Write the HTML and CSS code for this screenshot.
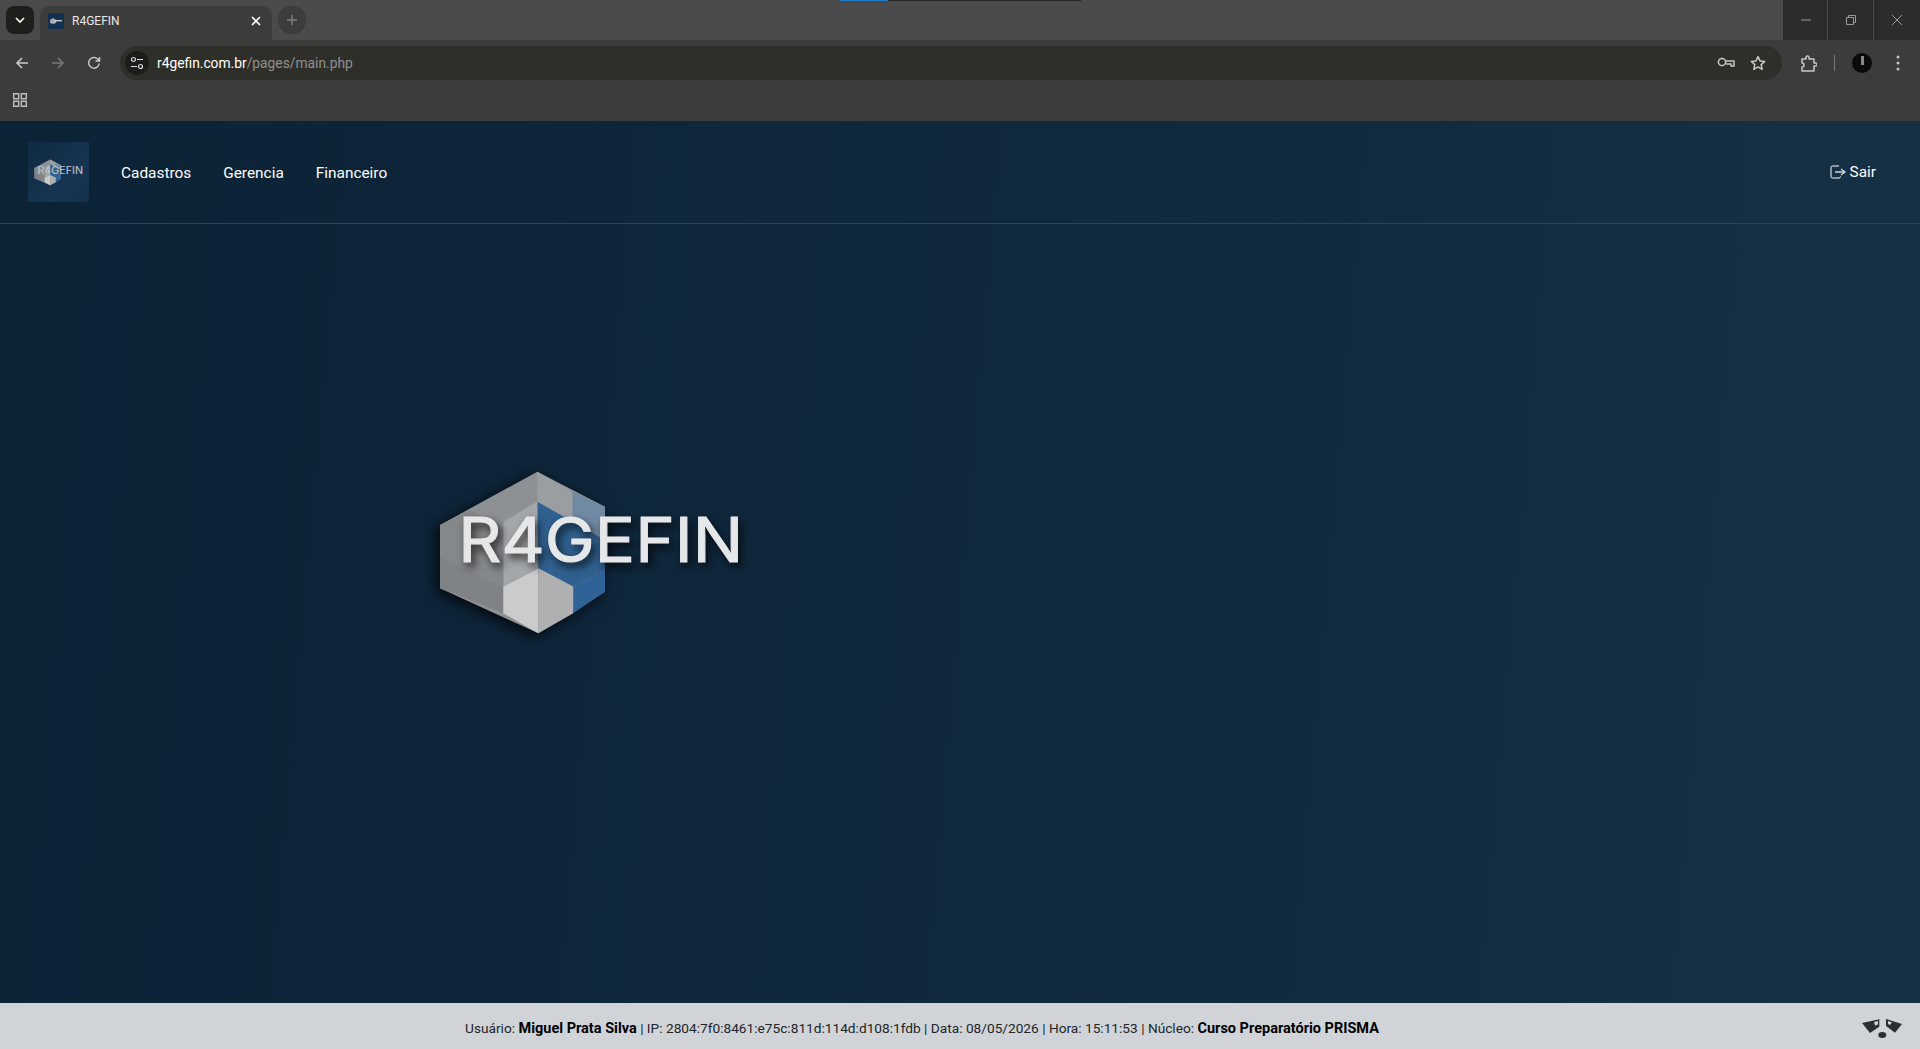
FILE: index.html
```html
<!DOCTYPE html>
<html lang="pt-BR">
<head>
  <meta charset="UTF-8">
  <meta name="viewport" content="width=device-width, initial-scale=1.0">
  <title>R4GEFIN</title>
  <link rel="stylesheet" href="styles.css">
</head>
<body>
  <svg class="defs" width="0" height="0" aria-hidden="true">
    <symbol id="logo-hex" viewBox="0 0 1140 600">
      <polygon points="412,65 120,225 120,415 415,550 615,425 615,170" fill="#8e9194"/>
      <polygon points="412,65 518,125 518,215 412,155" fill="#9b9ea1"/>
      <polygon points="518,125 615,170 615,270 518,215" fill="#718aa3"/>
      <polygon points="412,155 518,215 615,270 615,360 520,410 415,355" fill="#30608f"/>
      <polygon points="412,155 412,355 310,410 310,215" fill="#a4a7aa"/>
      <polygon points="120,225 210,180 310,230 310,410 120,320" fill="#85888b"/>
      <polygon points="120,320 310,410 310,490 120,415" fill="#808386"/>
      <polygon points="310,410 415,355 415,550 310,490" fill="#c9cbcd"/>
      <polygon points="415,355 520,410 520,490 415,550" fill="#aeb0b2"/>
      <polygon points="520,410 615,360 615,425 520,490" fill="#2f6398"/>
    </symbol>
  </svg>

  <div class="loading-bar"><span class="loading-done"></span></div>

  <header class="browser">
    <div class="tabstrip">
      <button class="tab-search" aria-label="Pesquisar guias">
        <svg width="12" height="12" viewBox="0 0 12 12"><path d="M2 4l4 4 4-4" fill="none" stroke="#fff" stroke-width="1.7"/></svg>
      </button>
      <div class="tab">
        <span class="favicon">
          <svg width="16" height="16" viewBox="0 0 16 16"><rect width="16" height="16" fill="#143050"/><polygon points="2,7 5,5 8,7 8,10 5,11 2,10" fill="#a9adb0"/><rect x="6" y="7" width="8" height="1.4" fill="#c9ccce"/></svg>
        </span>
        <span class="tab-title">R4GEFIN</span>
        <svg class="tab-close" width="12" height="12" viewBox="0 0 12 12"><path d="M2 2l8 8M10 2l-8 8" stroke="#fff" stroke-width="1.6"/></svg>
      </div>
      <button class="new-tab" aria-label="Nova guia">
        <svg width="12" height="12" viewBox="0 0 12 12"><path d="M6 1v10M1 6h10" stroke="#7d7d7d" stroke-width="1.5"/></svg>
      </button>
      <div class="window-controls">
        <span class="win-btn"><svg width="12" height="12" viewBox="0 0 12 12"><path d="M1 6h10" stroke="#999" stroke-width="1"/></svg></span>
        <span class="win-btn"><svg width="12" height="12" viewBox="0 0 12 12"><path d="M1.5 3.5h7v7h-7zM3.5 3.5v-2h7v7h-2" fill="none" stroke="#999" stroke-width="1"/></svg></span>
        <span class="win-btn"><svg width="12" height="12" viewBox="0 0 12 12"><path d="M1 1l10 10M11 1l-10 10" stroke="#999" stroke-width="1"/></svg></span>
      </div>
    </div>

    <div class="toolbar">
      <div class="toolbar-row">
        <svg class="tool-icon back" width="16" height="16" viewBox="0 0 16 16"><path d="M14 8H3M8 3L3 8l5 5" fill="none" stroke="#c7c7c7" stroke-width="1.6"/></svg>
        <svg class="tool-icon forward" width="16" height="16" viewBox="0 0 16 16"><path d="M2 8h11M8 3l5 5-5 5" fill="none" stroke="#777" stroke-width="1.6"/></svg>
        <svg class="tool-icon reload" width="16" height="16" viewBox="0 0 16 16"><path d="M13.2 8.5A5.3 5.3 0 1 1 11.6 4L13.5 6M13.5 2v4h-4" fill="none" stroke="#c7c7c7" stroke-width="1.5"/></svg>
        <div class="omnibox">
          <span class="site-info">
            <svg width="14" height="14" viewBox="0 0 14 14"><circle cx="3.5" cy="3.5" r="2" fill="none" stroke="#ddd" stroke-width="1.2"/><path d="M7 3.5h6M1 10.5h6" stroke="#ddd" stroke-width="1.2"/><circle cx="10.5" cy="10.5" r="2" fill="none" stroke="#ddd" stroke-width="1.2"/></svg>
          </span>
          <span class="url"><span class="url-host">r4gefin.com.br</span>/pages/main.php</span>
          <svg class="omni-key" width="18" height="12" viewBox="0 0 18 12"><circle cx="5" cy="5" r="3.6" fill="none" stroke="#c7c7c7" stroke-width="1.5"/><path d="M9 4h8v5h-3V7H9" fill="none" stroke="#c7c7c7" stroke-width="1.5"/></svg>
          <svg class="omni-star" width="16" height="16" viewBox="0 0 16 16"><path d="M8 1.500l2 4.400 4.700.5-3.500 3.200 1 4.700L8 11.900l-4.200 2.400 1-4.700L1.300 6.400 6 5.900z" fill="none" stroke="#c7c7c7" stroke-width="1.500" stroke-linejoin="round"/></svg>
        </div>
        <svg class="ext-icon" width="16" height="17" viewBox="0 0 16 17"><path d="M1 4h4V2.500a1.500 1.500 0 0 1 3 0V4h5v4h1.500a1 1 0 0 1 0 3H13v5H1v-4a2 2 0 0 0 0-4z" fill="none" stroke="#c7c7c7" stroke-width="1.500" stroke-linejoin="round"/></svg>
        <span class="tool-sep"></span>
        <span class="avatar"><span class="avatar-figure"></span></span>
        <svg class="menu-icon" width="4" height="16" viewBox="0 0 4 16"><circle cx="2" cy="2" r="1.500" fill="#c7c7c7"/><circle cx="2" cy="8" r="1.500" fill="#c7c7c7"/><circle cx="2" cy="14" r="1.500" fill="#c7c7c7"/></svg>
      </div>
      <div class="bookmarks">
        <svg width="14" height="14" viewBox="0 0 14 14"><path d="M.7.700h5v5h-5zM8.300.700h5v5h-5zM.7 8.300h5v5h-5zM8.300 8.300h5v5h-5z" fill="none" stroke="#bdbdbd" stroke-width="1.400"/></svg>
      </div>
    </div>
  </header>

  <div class="page">
    <nav class="navbar">
      <a class="brand" href="#">
        <svg class="brand-logo" width="61" height="32" viewBox="0 0 1140 600">
          <use href="#logo-hex" width="1140" height="600"/>
          <text class="logo-text" x="175" y="335" textLength="855" lengthAdjust="spacingAndGlyphs">R4GEFIN</text>
        </svg>
      </a>
      <ul class="nav-links">
        <li><a href="#">Cadastros</a></li>
        <li><a href="#">Gerencia</a></li>
        <li><a href="#">Financeiro</a></li>
      </ul>
      <a class="logout" href="#">
        <svg width="16" height="14" viewBox="0 0 16 14"><path d="M9 1H2.500A1.500 1.500 0 0 0 1 2.500v9A1.500 1.500 0 0 0 2.500 13H9a1.500 1.500 0 0 0 1.500-1.500" fill="none" stroke="#fff" stroke-width="1"/><path d="M5 7h9M11 4l4 3-4 3" fill="none" stroke="#cfd6dc" stroke-width="1.300"/></svg>
        Sair
      </a>
    </nav>

    <main class="content">
      <svg class="main-logo" width="380" height="200" viewBox="0 0 1140 600">
        <use class="logo-hex" href="#logo-hex" width="1140" height="600"/>
        <text class="logo-text" x="175" y="335" textLength="855" lengthAdjust="spacingAndGlyphs">R4GEFIN</text>
      </svg>
    </main>

    <footer class="status">
      <p class="status-text">Usuário: <b>Miguel Prata Silva</b> | IP: 2804:7f0:8461:e75c:811d:114d:d108:1fdb | Data: 08/05/2026 | Hora: 15:11:53 | Núcleo: <b>Curso Preparatório PRISMA</b></p>
      <svg class="mascot" width="44" height="22" viewBox="0 0 44 22">
        <path d="M2 6L19.300 2.300v7.400L10 16z" fill="#2b2f33"/>
        <path d="M26 2l16 5-7 8.700L26 9z" fill="#2b2f33"/>
        <path d="M14 5l4-1v3.500l-3 1z" fill="#d0d4d8"/>
        <path d="M28 4l4 1.500-2 2.500-2-1z" fill="#d0d4d8"/>
        <ellipse cx="22.300" cy="18" rx="4" ry="3" fill="#2b2f33"/>
      </svg>
    </footer>
  </div>
</body>
</html>
```

FILE: styles.css
```css
html, body {
  margin: 0;
  padding: 0;
  height: 100%;
  overflow: hidden;
}

body {
  display: flex;
  flex-direction: column;
  font-family: 'Roboto', sans-serif;
  background: #0e2336;
}

.defs {
  position: absolute;
}

.loading-bar {
  position: absolute;
  top: 0;
  left: 840px;
  width: 241px;
  height: 1px;
  background: #262626;
}

.loading-done {
  display: block;
  width: 48px;
  height: 1px;
  background: #2277c8;
}

/* browser */
.browser {
  flex: none;
}

.tabstrip {
  display: flex;
  align-items: flex-start;
  height: 40px;
  background: #4a4a4a;
}

.tab-search, .new-tab {
  display: flex;
  align-items: center;
  justify-content: center;
  width: 28px;
  height: 28px;
  margin-top: 6px;
  padding: 0;
  border: none;
}

.tab-search {
  margin-left: 6px;
  border-radius: 8px;
  background: #1e1e1a;
}

.tab {
  display: flex;
  align-items: center;
  width: 232px;
  height: 34px;
  margin: 6px 6px 0;
  box-sizing: border-box;
  padding: 0 10px 4px 8px;
  border-radius: 10px 10px 0 0;
  background: #3c3c3c;
}

.favicon {
  display: flex;
}

.tab-title {
  flex: 1;
  margin-left: 8px;
  font-size: 12px;
  color: #e8e8e8;
}

.new-tab {
  border-radius: 50%;
  background: #3c3c3c;
}

.window-controls {
  display: flex;
  margin-left: auto;
  height: 40px;
  background: #2c2c2c;
}

.win-btn {
  display: flex;
  align-items: center;
  justify-content: center;
  width: 46px;
  height: 40px;
}

.win-btn:first-child {
  width: 45px;
}

.win-btn + .win-btn {
  box-shadow: -1px 0 0 #484848;
}

.toolbar {
  height: 81px;
  background: #3c3c3c;
}

.toolbar-row {
  display: flex;
  align-items: center;
  height: 34px;
  padding-top: 6px;
}

.tool-icon {
  flex: none;
}

.back {
  margin-left: 14px;
}

.forward {
  margin-left: 20px;
}

.reload {
  margin-left: 20px;
}

.omnibox {
  display: flex;
  align-items: center;
  width: 1662px;
  height: 34px;
  margin-left: 18px;
  border-radius: 17px;
  background: #2f2f2a;
}

.site-info {
  display: flex;
  align-items: center;
  justify-content: center;
  width: 24px;
  height: 24px;
  margin-left: 5px;
  border-radius: 50%;
  background: #1c1c19;
}

.url {
  flex: 1;
  margin-left: 8px;
  font-size: 13.8px;
  color: #8f8f8f;
}

.url-host {
  color: #fff;
}

.omni-key {
  margin-right: 15px;
}

.omni-star {
  margin-right: 16px;
}

.ext-icon {
  margin-left: 19px;
}

.tool-sep {
  width: 1px;
  height: 16px;
  margin-left: 17px;
  background: #777;
}

.avatar {
  display: flex;
  justify-content: center;
  width: 20px;
  height: 20px;
  margin-left: 17px;
  border-radius: 50%;
  background: #0a0a0a;
}

.avatar-figure {
  width: 3px;
  height: 9px;
  margin-top: 3px;
  background: #888;
}

.menu-icon {
  margin-left: 24px;
}

.bookmarks {
  display: flex;
  align-items: center;
  height: 39px;
  padding-left: 13px;
}

/* page */
.page {
  flex: 1;
  display: flex;
  flex-direction: column;
  min-height: 0;
  background: linear-gradient(95deg, #0c2235 0%, #11293f 60%, #163145 100%);
}

.navbar {
  flex: none;
  display: flex;
  align-items: center;
  height: 102px;
  padding: 0 44px 0 28px;
  border-bottom: 1px solid #2a4558;
}

.brand {
  display: flex;
  align-items: center;
  width: 61px;
  height: 60px;
  background: linear-gradient(135deg, #0f2a42, #173553 70%, #132e48);
}

.brand-logo {
  display: block;
}

.nav-links {
  display: flex;
  gap: 32px;
  margin: 0 0 0 32px;
  padding: 0;
  list-style: none;
}

.nav-links a, .logout {
  font-size: 15.4px;
  color: #fff;
  text-decoration: none;
}

.logout {
  display: flex;
  align-items: center;
  gap: 4px;
  margin-left: auto;
}

.content {
  flex: 1;
  padding: 226px 0 0 400px;
}

.main-logo {
  display: block;
  overflow: visible;
}

.logo-hex {
  filter: drop-shadow(-12px 10px 22px rgba(0, 0, 0, 0.8));
}

.logo-text {
  font-family: 'Inter', sans-serif;
  font-size: 185px;
  fill: #bfc3c6;
  stroke: #bfc3c6;
  stroke-width: 2px;
  stroke-linejoin: round;
}

.main-logo .logo-text {
  fill: #e6e7e8;
  stroke: #e6e7e8;
  stroke-width: 3px;
  filter: drop-shadow(10px 14px 12px rgba(0, 0, 0, 0.7));
}

.status {
  flex: none;
  display: flex;
  align-items: center;
  justify-content: center;
  position: relative;
  height: 46px;
  padding-right: 76px;
  background: #d0d4d8;
}

.status-text {
  margin: 4px 0 0;
  font-size: 13.7px;
  color: #212529;
}

.status-text b {
  font-size: 14.5px;
  color: #000;
}

.mascot {
  position: absolute;
  right: 16px;
  top: 14px;
}
```
